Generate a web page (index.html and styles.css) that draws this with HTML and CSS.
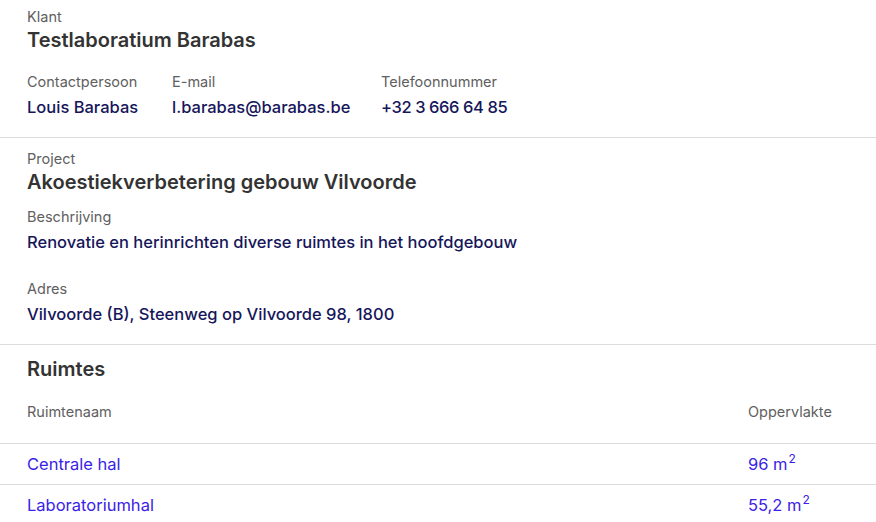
FILE: index.html
```html
<!DOCTYPE html>
<html lang="nl">
<head>
<meta charset="utf-8">
<link rel="stylesheet" href="styles.css">
</head>
<body>
<section class="section s-client">
  <div class="label">Klant</div>
  <div class="title">Testlaboratium Barabas</div>
  <div class="contacts">
    <div class="field f-contact">
      <div class="label">Contactpersoon</div>
      <div class="value">Louis Barabas</div>
    </div>
    <div class="field f-mail">
      <div class="label">E-mail</div>
      <div class="value">l.barabas@barabas.be</div>
    </div>
    <div class="field">
      <div class="label">Telefoonnummer</div>
      <div class="value phone">+32 3 666 64 85</div>
    </div>
  </div>
</section>
<section class="section s-project">
  <div class="label">Project</div>
  <div class="title">Akoestiekverbetering gebouw Vilvoorde</div>
  <div class="label mt-desc">Beschrijving</div>
  <div class="value">Renovatie en herinrichten diverse ruimtes in het hoofdgebouw</div>
  <div class="label mt-addr">Adres</div>
  <div class="value">Vilvoorde (B), Steenweg op Vilvoorde 98, 1800</div>
</section>
<section class="rooms">
  <div class="title rooms-title">Ruimtes</div>
  <div class="row head">
    <div class="label">Ruimtenaam</div>
    <div class="label area">Oppervlakte</div>
  </div>
  <div class="row item">
    <div class="link">Centrale hal</div>
    <div class="link area">96 m<sup>2</sup></div>
  </div>
  <div class="row item">
    <div class="link">Laboratoriumhal</div>
    <div class="link area">55,2 m<sup>2</sup></div>
  </div>
</section>
</body>
</html>
```
FILE: styles.css
```css
* { box-sizing: border-box; }
html, body { margin: 0; padding: 0; background: #fff; }
body {
  font-family: "Inter", "Open Sans", sans-serif;
  color: #333;
  width: 876px;
  overflow: hidden;
}
.section {
  padding: 7px 27px 17px;
  border-bottom: 1px solid #dcdcdc;
}
.s-project { padding-top: 11px; }
.label {
  font-size: 14.5px;
  line-height: 20px;
  color: #606060;
}
.title {
  font-size: 20px;
  line-height: 26px;
  font-weight: 600;
  color: #333;
}
.value {
  font-size: 16.5px;
  line-height: 26px;
  font-weight: 500;
  color: #16165a;
  margin-top: 2px;
}
.phone { letter-spacing: -0.4px; }
.contacts {
  display: flex;
  margin-top: 19px;
}
.f-contact { width: 145px; }
.f-mail { width: 209px; }
.mt-desc { margin-top: 12px; }
.mt-addr { margin-top: 24px; }
.rooms { padding-top: 11px; }
.rooms-title { padding: 0 27px; }
.row {
  display: flex;
  padding: 0 27px;
  border-bottom: 1px solid #dcdcdc;
}
.row > :first-child { flex: 1; }
.area { width: 101px; }
.head { margin-top: 20px; padding-bottom: 21px; }
.item { padding-top: 7px; padding-bottom: 7px; }
.item:last-child { border-bottom: none; }
.link {
  font-size: 16.5px;
  line-height: 26px;
  color: #3a22e6;
}
sup { font-size: 12px; line-height: 0; vertical-align: 7px; margin-left: 1px; }
```
